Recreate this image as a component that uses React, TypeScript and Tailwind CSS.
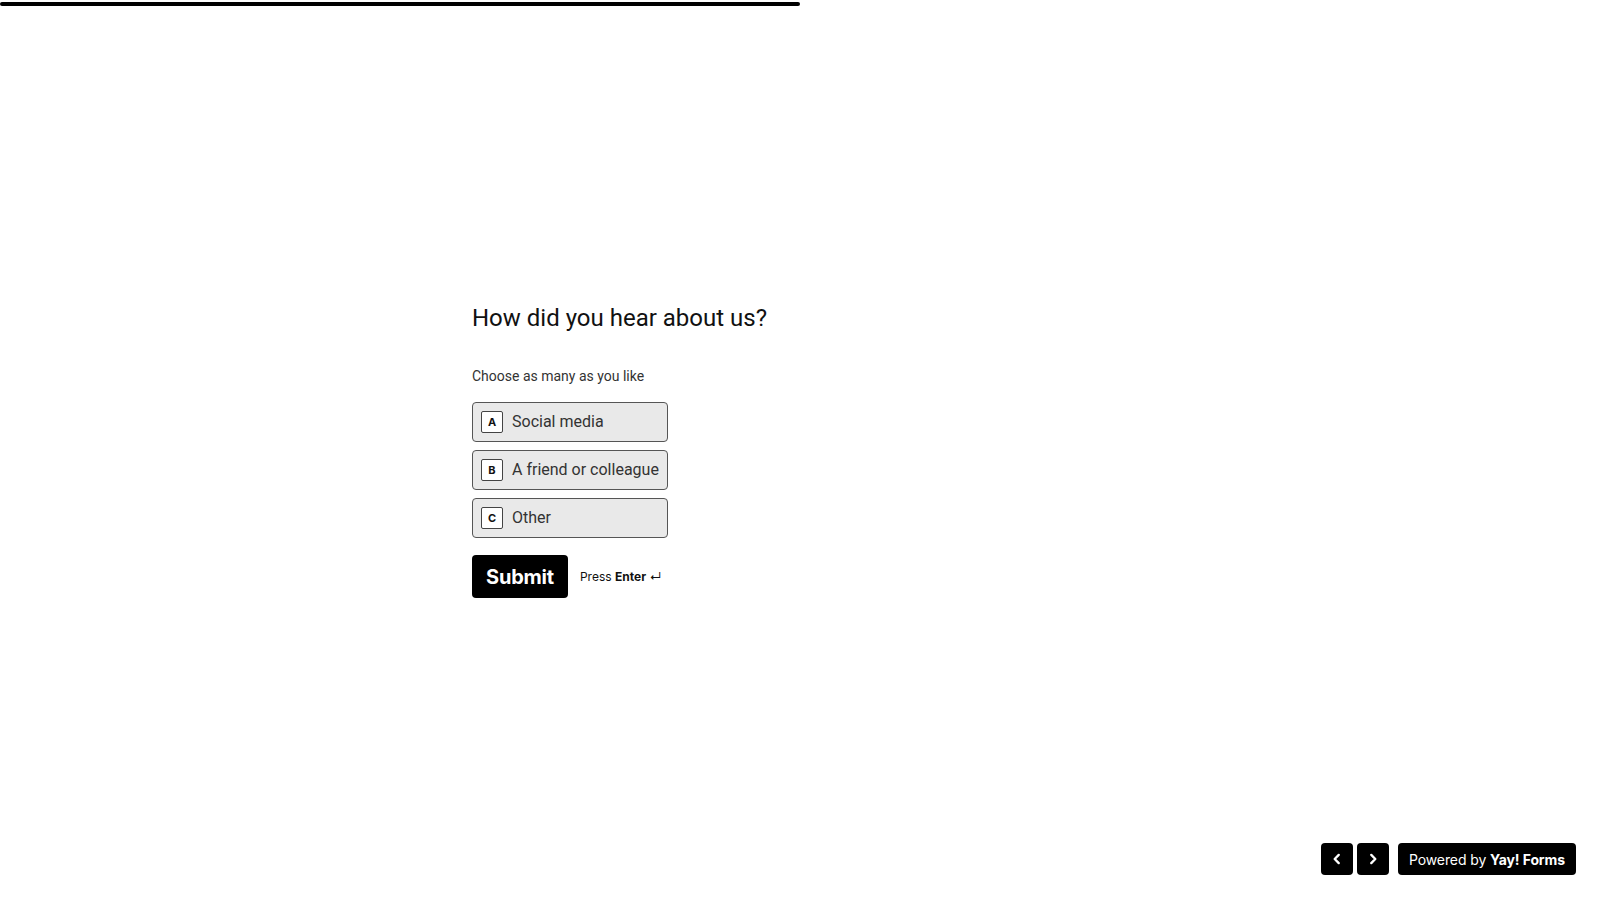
import { useState } from 'react';

const options = [
  { key: 'A', label: 'Social media' },
  { key: 'B', label: 'A friend or colleague' },
  { key: 'C', label: 'Other' },
];

export default function App() {
  const [selected, setSelected] = useState<string[]>([]);

  const toggle = (key: string) =>
    setSelected((s) => (s.includes(key) ? s.filter((k) => k !== key) : [...s, key]));

  return (
    <div className="relative h-screen w-full bg-white font-['Roboto',sans-serif] text-[#111]">
      {/* Progress */}
      <div className="absolute left-0 top-0 w-full pt-[2px]">
        <div className="h-[4px] w-1/2 rounded-full bg-black" />
      </div>

      <main className="flex h-full items-center">
        <div className="mx-auto w-[656px]">
          <h1 className="text-[24px] leading-[32px] font-normal">How did you hear about us?</h1>
          <p className="mt-[32px] text-[14px] leading-[20px] text-[#333]">Choose as many as you like</p>

          <div className="mt-[16px] inline-flex flex-col gap-[8px]">
            {options.map((o) => (
              <button
                key={o.key}
                onClick={() => toggle(o.key)}
                className={`flex h-[40px] items-center gap-[9px] rounded-[4px] border border-[#555] px-[8px] text-left ${
                  selected.includes(o.key) ? 'bg-[#d6d6d6]' : 'bg-[#e9e9e9]'
                }`}
              >
                <span className="flex h-[22px] w-[22px] items-center justify-center rounded-[2px] border border-[#444] bg-white font-['Inter',sans-serif] text-[11px] leading-none font-bold text-[#111]">
                  {o.key}
                </span>
                <span className="text-[16px] text-[#333]">{o.label}</span>
              </button>
            ))}
          </div>

          <div className="mt-[17px] flex items-center gap-[12px]">
            <button className="h-[43px] rounded-[4px] bg-black px-[14px] font-['Inter',sans-serif] text-[20px] font-bold tracking-[-0.2px] text-white">
              Submit
            </button>
            <span className="font-['Inter',sans-serif] text-[12px] text-[#111]">
              Press <b className="font-bold">Enter</b> ↵
            </span>
          </div>
        </div>
      </main>

      {/* Footer controls */}
      <div className="absolute bottom-[25px] right-[24px] flex items-center gap-[4px] font-['Inter',sans-serif]">
        <button className="flex h-[32px] w-[32px] items-center justify-center rounded-[4px] bg-black text-white">
          <svg width="14" height="14" viewBox="0 0 24 24" fill="none" stroke="currentColor" strokeWidth="4" strokeLinecap="round" strokeLinejoin="round">
            <path d="M15 5l-7 7 7 7" />
          </svg>
        </button>
        <button className="flex h-[32px] w-[32px] items-center justify-center rounded-[4px] bg-black text-white">
          <svg width="14" height="14" viewBox="0 0 24 24" fill="none" stroke="currentColor" strokeWidth="4" strokeLinecap="round" strokeLinejoin="round">
            <path d="M9 5l7 7-7 7" />
          </svg>
        </button>
        <a href="#" className="ml-[5px] flex h-[32px] items-center rounded-[4px] bg-black px-[11px] text-[14px] tracking-[-0.1px] text-white">
          Powered by&nbsp;<b className="font-bold">Yay! Forms</b>
        </a>
      </div>
    </div>
  );
}
